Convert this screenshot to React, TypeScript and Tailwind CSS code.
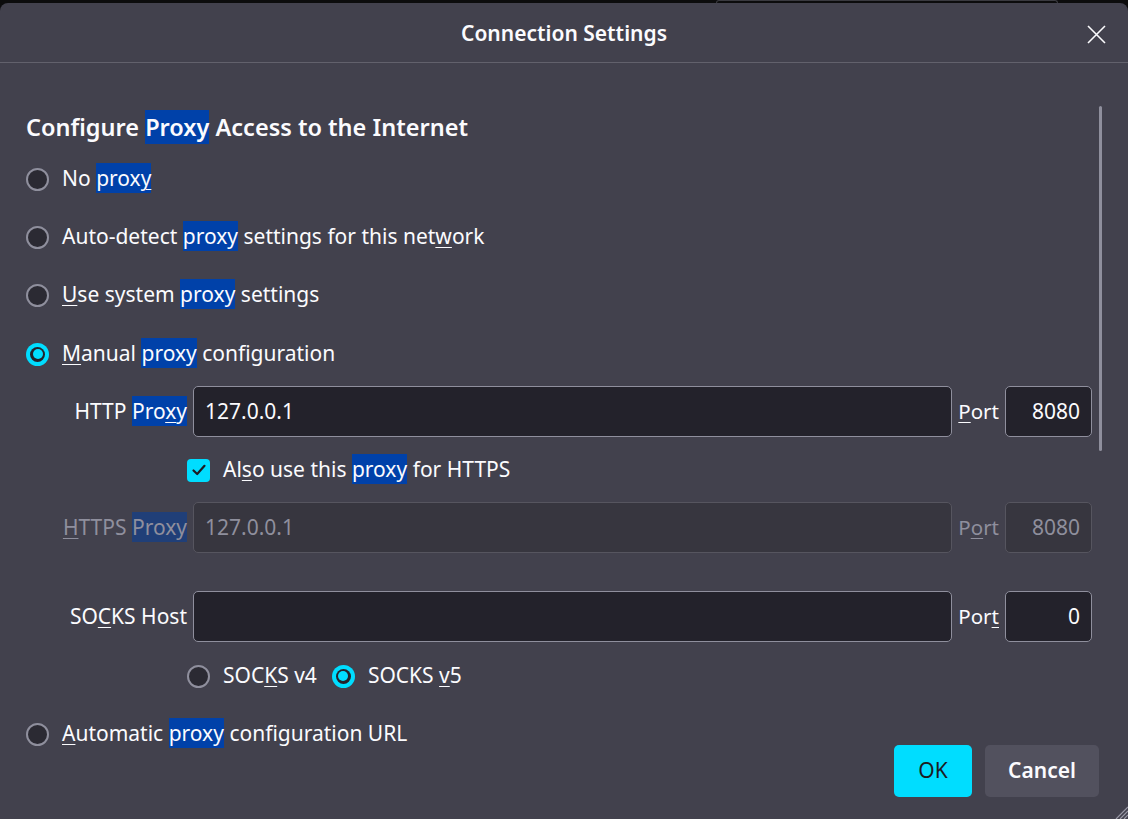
import React from "react";

const HL = "bg-[#0041a9]";
const HL_DIM = "bg-[#203f78]";

const U = ({ children }: { children: React.ReactNode }) => (
  <span className="underline decoration-1 underline-offset-[3px]">{children}</span>
);

const Radio = ({ checked = false }: { checked?: boolean }) =>
  checked ? (
    <div className="w-[23px] h-[23px] rounded-full bg-[#00ddff] flex items-center justify-center shrink-0">
      <div className="w-[15px] h-[15px] rounded-full bg-[#23222b] flex items-center justify-center">
        <div className="w-[10px] h-[10px] rounded-full bg-[#00ddff]" />
      </div>
    </div>
  ) : (
    <div className="w-[23px] h-[23px] rounded-full border-[2.5px] border-[#8f8f9d] bg-[#2b2a33] shrink-0" />
  );

const Checkbox = () => (
  <div className="w-[23px] h-[23px] rounded-[4px] bg-[#00ddff] flex items-center justify-center shrink-0">
    <svg width="16" height="16" viewBox="0 0 16 16">
      <path d="M2.5 8.5 L6.2 12 L13.5 3.8" fill="none" stroke="#1c1b22" strokeWidth="2.2" strokeLinecap="round" strokeLinejoin="round" />
    </svg>
  </div>
);

const Field = ({ value, disabled = false, right = false }: { value: string; disabled?: boolean; right?: boolean }) => (
  <div
    className={`h-[51px] rounded-[5px] border flex items-center px-[11px] ${
      disabled ? "bg-[#37363f] border-[#56555f] text-[#8f8f9d]" : "bg-[#23222b] border-[#8f8f9d] text-[#fbfbfe]"
    } ${right ? "justify-end" : ""}`}
  >
    {value}
  </div>
);

export default function App() {
  return (
    <div
      className="w-[1128px] h-[819px] bg-[#0c0c0d] overflow-hidden relative text-[#fbfbfe] text-[21px]"
      style={{ fontFamily: '"Noto Sans", "Open Sans", sans-serif' }}
    >
      <div className="h-[3px] flex">
        <div className="ml-[716px] w-[342px] border-t border-x border-[#3a3a40] rounded-t-[4px]" />
      </div>
      <div className="h-[816px] bg-[#42414d] rounded-t-[8px] flex flex-col">
        {/* header */}
        <div className="h-[60px] pt-[3px] border-b border-[#62616c] flex items-center justify-center relative shrink-0">
          <span className="font-semibold text-[21px]">Connection Settings</span>
          <svg className="absolute right-[22px] top-[22px]" width="19" height="19" viewBox="0 0 19 19">
            <path d="M1 1 L18 18 M18 1 L1 18" stroke="#fbfbfe" strokeWidth="1.6" />
          </svg>
        </div>

        <div className="flex flex-1">
          <div className="flex-1 pl-[26px] pr-[6px] flex flex-col">
            <div className="mt-[47px] h-[36px] flex items-center text-[23.5px] font-semibold">
              <span>
                Configure <span className={`${HL} py-[1px]`}>Proxy</span> Access to the Internet
              </span>
            </div>

            <div className="mt-[18px] h-[30px] flex items-center gap-[13px]">
              <Radio />
              <span>
                No <span className={`${HL} py-[1px]`}>prox<U>y</U></span>
              </span>
            </div>
            <div className="mt-[28px] h-[30px] flex items-center gap-[13px]">
              <Radio />
              <span>
                Auto-detect <span className={`${HL} py-[1px]`}>proxy</span> settings for this net<U>w</U>ork
              </span>
            </div>
            <div className="mt-[28px] h-[30px] flex items-center gap-[13px]">
              <Radio />
              <span>
                <U>U</U>se system <span className={`${HL} py-[1px]`}>proxy</span> settings
              </span>
            </div>
            <div className="mt-[29px] h-[30px] flex items-center gap-[13px]">
              <Radio checked />
              <span>
                <U>M</U>anual <span className={`${HL} py-[1px]`}>proxy</span> configuration
              </span>
            </div>

            <div className="mt-[17px] grid grid-cols-[161px_1fr_auto_87px] gap-x-[6px] items-center">
              <span className="text-right">
                HTTP <span className={`${HL} py-[1px]`}>Pro<U>x</U>y</span>
              </span>
              <Field value="127.0.0.1" />
              <span className="text-[20.5px]">
                <U>P</U>ort
              </span>
              <Field value="8080" right />
            </div>

            <div className="mt-[18px] ml-[161px] h-[30px] flex items-center gap-[13px]">
              <Checkbox />
              <span>
                Al<U>s</U>o use this <span className={`${HL} py-[1px]`}>proxy</span> for HTTPS
              </span>
            </div>

            <div className="mt-[17px] grid grid-cols-[161px_1fr_auto_87px] gap-x-[6px] items-center text-[#8f8f9d]">
              <span className="text-right">
                <U>H</U>TTPS <span className={`${HL_DIM} py-[1px]`}>Proxy</span>
              </span>
              <Field value="127.0.0.1" disabled />
              <span className="text-[20.5px]">
                P<U>o</U>rt
              </span>
              <Field value="8080" disabled right />
            </div>

            <div className="mt-[38px] grid grid-cols-[161px_1fr_auto_87px] gap-x-[6px] items-center">
              <span className="text-right">
                SO<U>C</U>KS Host
              </span>
              <Field value="" />
              <span className="text-[20.5px]">
                Por<U>t</U>
              </span>
              <Field value="0" right />
            </div>

            <div className="mt-[19px] ml-[161px] h-[30px] flex items-center">
              <Radio />
              <span className="ml-[13px]">
                SOC<U>K</U>S v4
              </span>
              <div className="ml-[15px]">
                <Radio checked />
              </div>
              <span className="ml-[13px]">
                SOCKS <U>v</U>5
              </span>
            </div>

            <div className="mt-[28px] h-[30px] flex items-center gap-[13px]">
              <Radio />
              <span>
                <U>A</U>utomatic <span className={`${HL} py-[1px]`}>proxy</span> configuration URL
              </span>
            </div>

            <div className="-mt-[4px] flex justify-end gap-[13px] mr-[-7px]">
              <button className="w-[78px] h-[52px] rounded-[5px] bg-[#00ddff] text-[#1c1b22] text-[21px]">OK</button>
              <button className="w-[114px] h-[52px] rounded-[5px] bg-[#52515e] text-[#fbfbfe] font-semibold text-[21px]">
                Cancel
              </button>
            </div>
          </div>

          <div className="w-[30px] shrink-0 flex flex-col">
            <div className="mt-[43px] ml-[1px] w-[3px] h-[345px] rounded-full bg-[#8f8f9d]" />
          </div>
        </div>

        <div className="flex justify-end -mt-[14px] h-[14px]">
          <svg width="14" height="14" viewBox="0 0 14 14">
            <path d="M14 2 L2 14 M14 6 L6 14 M14 10 L10 14" stroke="#9a99a6" strokeWidth="1.2" />
          </svg>
        </div>
      </div>
    </div>
  );
}
